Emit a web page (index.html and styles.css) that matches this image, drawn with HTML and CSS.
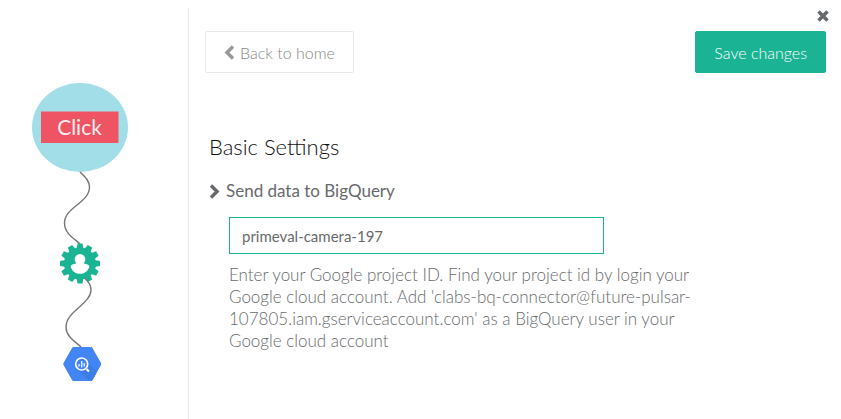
FILE: index.html
```
<!DOCTYPE html>
<html lang="en">
<head>
  <meta charset="UTF-8" />
  <title>BigQuery connector settings</title>
  <meta name="viewport" content="width=device-width, initial-scale=1" />
  <link rel="stylesheet" href="styles.css">
</head>
<body>
  <div class="page">
    <aside class="flow">
      <svg class="flow-chart" width="98" height="302" viewBox="31 82 98 302" role="img" aria-label="Click trigger flow">
        <!-- click trigger -->
        <ellipse cx="80" cy="127.5" rx="48" ry="44.5" fill="#a2dee8" />
        <rect x="41" y="111.5" width="77.5" height="31.5" fill="#ef5464" />
        <text class="flow-label" x="79.5" y="135" text-anchor="middle">Click</text>

        <!-- user gear -->
        <path d="M80 172 C84 176 89.500 180 89.500 187 C89.500 203 64.500 207 64.500 223 C64.500 234 75 239 80 244" fill="none" stroke="#777" stroke-width="1.400" />
        <g fill="#1ab394">
          <circle cx="80" cy="263.500" r="16" />
          <g id="teeth">
            <path id="tooth" d="M76.500 249 L77.500 243.500 H82.500 L83.500 249 Z" />
            <use href="#tooth" transform="rotate(30 80 263.500)" />
            <use href="#tooth" transform="rotate(60 80 263.500)" />
          </g>
          <use href="#teeth" transform="rotate(90 80 263.500)" />
          <use href="#teeth" transform="rotate(180 80 263.500)" />
          <use href="#teeth" transform="rotate(270 80 263.500)" />
        </g>
        <path d="M80 254 a5.300 5.300 0 0 1 5.300 5.300 c0 2-.8 3-1.500 4.200 c3 .5 5 1.500 5.500 2.500 c-.5 4.500-4.300 7.800-9.300 7.800 s-8.800-3.300-9.300-7.800 c.5-1 2.500-2 5.500-2.500 c-.7-1.200-1.500-2.200-1.500-4.200 a5.300 5.300 0 0 1 5.300-5.300 Z" fill="#fff" />

        <!-- bigquery -->
        <path d="M84.500 278 C88 281 91 285 91 290 C91 304 66 311 66 327 C66 337 76 342 81 347" fill="none" stroke="#777" stroke-width="1.400" />
        <path d="M73.500 347 H91 Q92 347 92.500 348 L101 363 Q101.500 364 101 365 L92.500 380 Q92 381 91 381 H73.500 Q72.500 381 72 380 L63.500 365 Q63 364 63.500 363 L72 348 Q72.500 347 73.500 347 Z" fill="#4285f4" />
        <path d="M77 369 L89 381 H91 Q92 381 92.500 380 L97 372 L87 361 L86 368 Z" fill="#3f7de6" />
        <circle cx="81.700" cy="364" r="6" fill="#4285f4" stroke="#fff" stroke-width="1.700" />
        <path d="M86.500 369 L89 371.500" stroke="#fff" stroke-width="2.200" />
        <path d="M79 364 V366.500 M81.700 361 V367.500 M84.300 363 V366.500" stroke="#dbe8fd" stroke-width="1.500" />
      </svg>
    </aside>

    <main class="settings">
      <button class="close" type="button" aria-label="Close">
        <svg width="14" height="14" viewBox="0 0 14 14"><path d="M2.500 2.500 L11.500 11.500 M11.500 2.500 L2.500 11.500" stroke="#676a6c" stroke-width="3.500" /></svg>
      </button>

      <div class="toolbar">
        <a class="btn btn-default" href="#">
          <svg width="11" height="15" viewBox="0 0 11 15"><path d="M9 1.500 L3 7.500 L9 13.500" fill="none" stroke="#999" stroke-width="3.500" /></svg>
          Back to home
        </a>
        <button class="btn btn-primary" type="button">Save changes</button>
      </div>

      <form class="settings-form">
        <h2>Basic Settings</h2>
        <label class="field-label" for="project">
          <svg width="11" height="15" viewBox="0 0 11 15"><path d="M2 1.500 L8 7.500 L2 13.500" fill="none" stroke="#676a6c" stroke-width="3.500" /></svg>
          Send data to BigQuery
        </label>
        <div class="field">
          <input id="project" type="text" value="primeval-camera-197">
          <p>Enter your Google project ID. Find your project id by login your Google cloud account. Add 'clabs-bq-connector@future-pulsar-107805.iam.gserviceaccount.com' as a BigQuery user in your Google cloud account</p>
        </div>
      </form>
    </main>
  </div>
</body>
</html>
```
FILE: styles.css
```
* { box-sizing: border-box; }
body {
  margin: 0; background: #fff; color: #676a6c;
  font-family: Lato, "Open Sans", sans-serif; font-size: 16px; font-weight: 300;
}
.page { display: flex; min-height: 100vh; padding-top: 8px; }
.flow { flex: 0 0 189px; padding: 74px 0 0 31px; border-right: 1px solid #e7eaec; }
.flow-chart { display: block; }
.flow-label { font-size: 21px; font-weight: 400; fill: #fdecee; }

.settings { flex: 1; min-width: 0; padding: 0 11px 24px 16px; }
.close {
  display: block; margin: 1px 0 8px auto; padding: 0;
  border: none; background: none; cursor: pointer;
}
.close svg { display: block; }

.toolbar { display: flex; justify-content: space-between; padding-right: 4px; }
.btn {
  display: flex; align-items: center; gap: 5px; height: 42px; padding: 0 18px;
  border: 1px solid #e7eaec; border-radius: 2px;
  font-family: inherit; font-size: 16px; font-weight: 300; text-decoration: none; cursor: pointer;
}
.btn-default { background: #fff; color: #888; }
.btn-primary { background: #1ab394; border-color: #1ab394; color: #fff; }

.settings-form { padding: 60px 0 0 4px; }
h2 { margin: 0; font-size: 22px; line-height: 28px; font-weight: 300; color: #111; }
.field-label {
  display: flex; align-items: center; gap: 6px; margin: 18px 0 14px;
  font-size: 17px; line-height: 24px; font-weight: 400;
}
.field { padding-left: 20px; max-width: 500px; }
.field input {
  display: block; width: 375px; max-width: 100%; height: 37px; padding: 0 12px;
  border: 1px solid #1ab394; border-radius: 0; background: #fff; color: #676a6c;
  font-family: inherit; font-size: 15px; font-weight: 400; outline: none;
}
.field p { margin: 10px 0 0; font-size: 17px; line-height: 22px; }
```
